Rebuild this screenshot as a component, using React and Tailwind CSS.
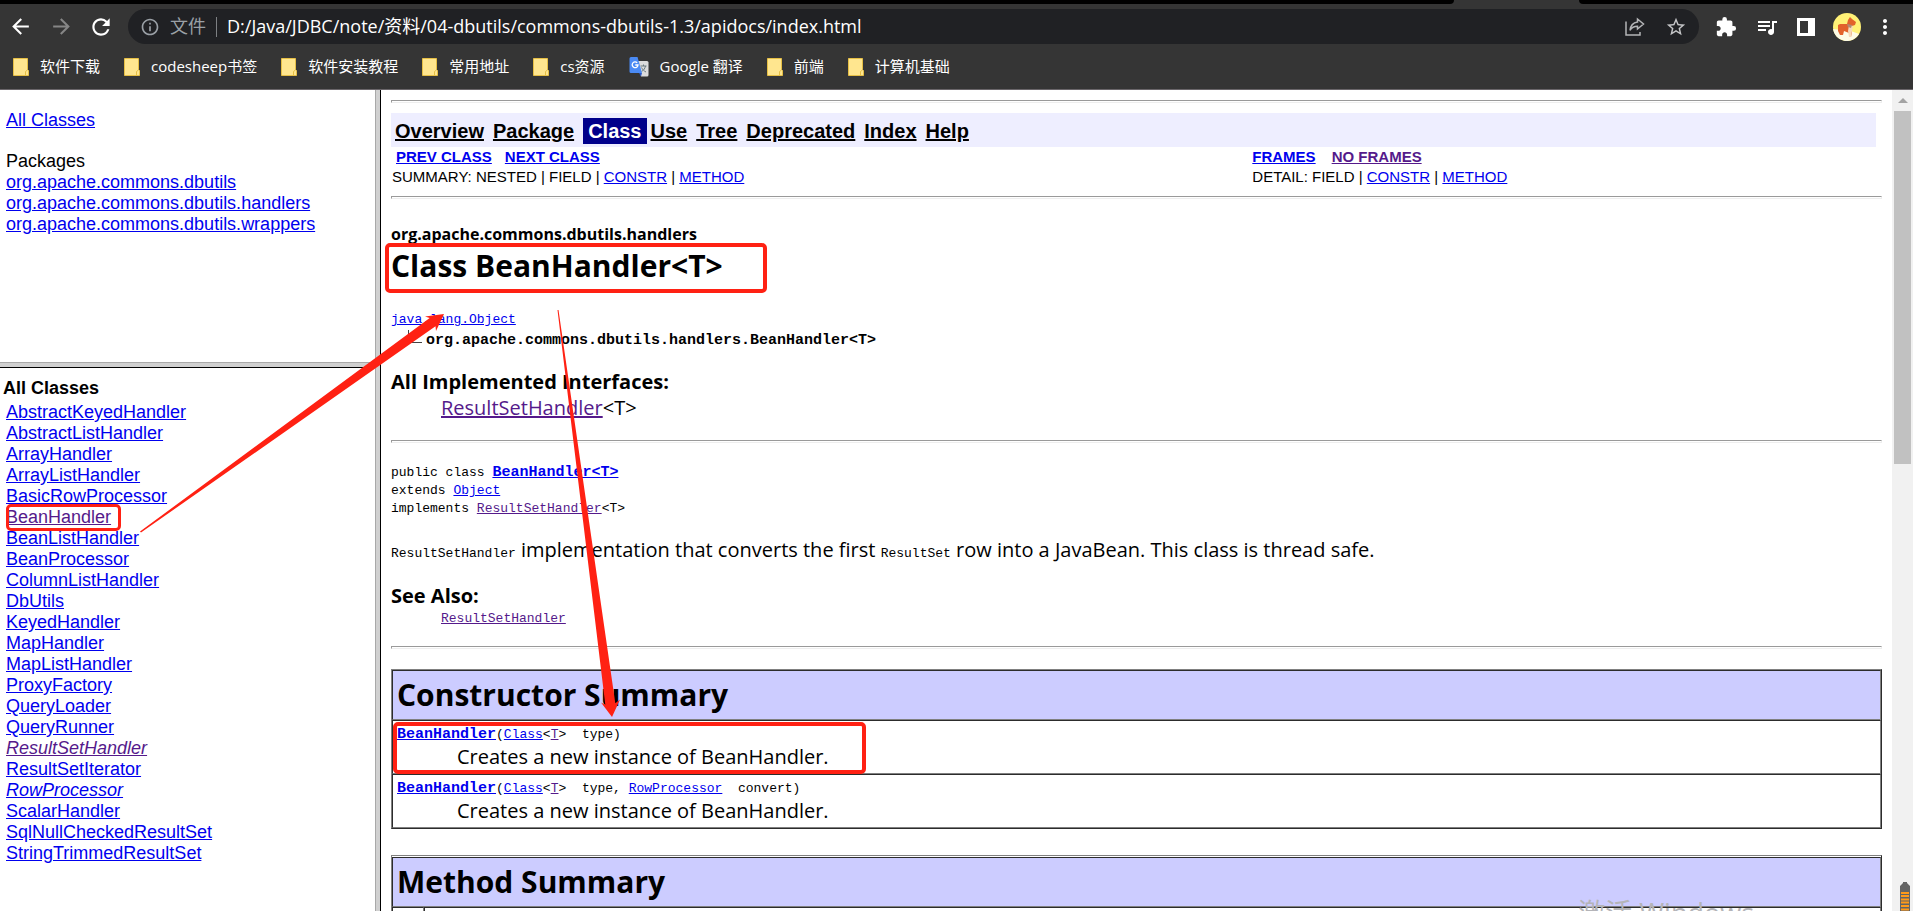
import React from "react";
import {
  MdArrowBack,
  MdArrowForward,
  MdExtension,
  MdInfoOutline,
  MdMoreVert,
  MdQueueMusic,
  MdRefresh,
  MdStarBorder,
} from "react-icons/md";

const bookmarks = [
  { label: "软件下载" },
  { label: "codesheep书签" },
  { label: "软件安装教程" },
  { label: "常用地址" },
  { label: "cs资源" },
  { label: "Google 翻译", icon: "translate" },
  { label: "前端" },
  { label: "计算机基础" },
];

const packages = [
  "org.apache.commons.dbutils",
  "org.apache.commons.dbutils.handlers",
  "org.apache.commons.dbutils.wrappers",
];

const classes = [
  { name: "AbstractKeyedHandler" },
  { name: "AbstractListHandler" },
  { name: "ArrayHandler" },
  { name: "ArrayListHandler" },
  { name: "BasicRowProcessor" },
  { name: "BeanHandler", visited: true, marked: true },
  { name: "BeanListHandler" },
  { name: "BeanProcessor" },
  { name: "ColumnListHandler" },
  { name: "DbUtils" },
  { name: "KeyedHandler" },
  { name: "MapHandler" },
  { name: "MapListHandler" },
  { name: "ProxyFactory" },
  { name: "QueryLoader" },
  { name: "QueryRunner" },
  { name: "ResultSetHandler", visited: true, italic: true },
  { name: "ResultSetIterator" },
  { name: "RowProcessor", italic: true },
  { name: "ScalarHandler" },
  { name: "SqlNullCheckedResultSet" },
  { name: "StringTrimmedResultSet" },
];

function Link({ visited, className = "", children }) {
  return (
    <a
      href="#"
      className={`underline ${visited ? "text-[#551a8b]" : "text-[#0000ee]"} ${className}`}
    >
      {children}
    </a>
  );
}

function Code({ className = "", children }) {
  return (
    <code className={`font-['Liberation_Mono',monospace] text-[13px] whitespace-pre ${className}`}>
      {children}
    </code>
  );
}

function Rule({ className = "" }) {
  return (
    <hr
      className={`h-[3px] border border-t-[#9a9a9a] border-r-[#eeeeee] border-b-[#eeeeee] border-l-[#9a9a9a] ${className}`}
    />
  );
}

function FolderIcon() {
  return (
    <svg width="16" height="18" viewBox="0 0 16 18" aria-hidden="true">
      <path d="M.5.5h14v11l1 1v5H.5z" fill="#ffe68f" stroke="#e6bf45" />
      <path d="M12.500 17v-3.500l2-1.500" fill="none" stroke="#e6bf45" />
    </svg>
  );
}

function TranslateIcon() {
  return (
    <svg width="20" height="20" viewBox="0 0 20 20" aria-hidden="true">
      <path d="M8 4h10a1.500 1.500 0 0 1 1.500 1.500V18a1.500 1.500 0 0 1-1.500 1.500h-6z" fill="#dcdcdc" />
      <path d="M11.500 9h6M14.500 7.500V9M16.500 9c-.5 2.500-2 4.500-4 5.500M12.500 10.500c1 2 2.500 3.500 4.500 4.500" fill="none" stroke="#6b7b80" />
      <path d="M2 0h6.500l4.500 16H2a1.500 1.500 0 0 1-1.500-1.500v-13A1.500 1.500 0 0 1 2 0z" fill="#4a8af4" />
      <path d="M13 16h-3l2 3.500z" fill="#2a56c6" />
      <path d="M8.200 5.800a2.900 2.900 0 1 0 .8 2.200H6.300" fill="none" stroke="#fff" strokeWidth="1.300" />
    </svg>
  );
}

function ShareIcon() {
  return (
    <svg width="20" height="20" viewBox="0 0 20 20" fill="none" stroke="#b4b5b7" strokeWidth="1.500" aria-hidden="true">
      <path d="M1 4.500V18h14v-3" />
      <path d="M12.500 2l6 5-6 5V9.300c-3.500 0-5.800 1.200-7.500 4 .5-4.500 3-7.600 7.500-8.300z" />
    </svg>
  );
}

function Avatar() {
  return (
    <svg width="28" height="28" viewBox="0 0 28 28" aria-hidden="true">
      <circle cx="14" cy="14" r="14" fill="#fff176" />
      <path d="M0 16a14 14 0 0 0 26 5l-8-3z" fill="#fdfbe6" />
      <path d="M5 12l2-1 7 0 1-4 2-3 2 2 4 3-1 3-3 1v6l-1 5h-2v-4l-5-2-1 4H7l-2-4z" fill="#e2622b" />
      <path d="M16 12l4 1-1 5-1 6h-2l-1-6z" fill="#f6d9b8" />
      <path d="M14 11l5 1-1 3-3-1z" fill="#b08a72" />
    </svg>
  );
}

function Toolbar() {
  return (
    <header className="shrink-0 border-b border-[#6a666a] bg-[#353535] font-['Open_Sans','Noto_Sans_CJK_SC',sans-serif]">
      {/* bottom edge of the tab strip */}
      <div className="flex h-1">
        <div className="flex-1 rounded-br bg-black" />
        <div className="w-[125px]" />
        <div className="w-[334px] rounded-bl bg-black" />
      </div>

      <div className="flex items-center pt-[5px] pr-4 pl-2">
        <button type="button" aria-label="Back" className="text-white">
          <MdArrowBack size={25} />
        </button>
        <button type="button" aria-label="Forward" className="ml-4 text-[#868686]">
          <MdArrowForward size={25} />
        </button>
        <button type="button" aria-label="Reload" className="ml-3.5 text-white">
          <MdRefresh size={26} />
        </button>

        <div className="ml-3.5 flex h-[35px] flex-1 items-center rounded-full bg-[#202124] pr-3 pl-3">
          <MdInfoOutline size={20} className="text-[#9aa0a6]" />
          <label htmlFor="address" className="ml-2.5 text-[18px] text-[#9aa0a6]">
            文件
          </label>
          <span className="ml-2.5 h-5 w-px bg-[#7d8083]" />
          <input
            id="address"
            type="text"
            defaultValue="D:/Java/JDBC/note/资料/04-dbutils/commons-dbutils-1.3/apidocs/index.html"
            className="ml-2.5 min-w-0 flex-1 bg-transparent text-[18px] text-white outline-none"
          />
          <button type="button" aria-label="Share" className="ml-4">
            <ShareIcon />
          </button>
          <button type="button" aria-label="Bookmark" className="ml-5 text-[#c4c5c7]">
            <MdStarBorder size={22} />
          </button>
        </div>

        <div className="ml-4 flex items-center gap-[18px] text-white">
          <button type="button" aria-label="Extensions">
            <MdExtension size={22} />
          </button>
          <button type="button" aria-label="Media">
            <MdQueueMusic size={24} />
          </button>
          <button type="button" aria-label="Side panel">
            <svg width="18" height="18" viewBox="0 0 18 18">
              <path d="M0 0h18v18H0zM3 3v12h8V3z" fill="#fff" fillRule="evenodd" />
            </svg>
          </button>
          <button type="button" aria-label="Profile">
            <Avatar />
          </button>
        </div>
        <button type="button" aria-label="Menu" className="ml-3 text-white">
          <MdMoreVert size={24} />
        </button>
      </div>

      <nav className="flex h-[45px] items-center gap-6 pl-[13px]">
        {bookmarks.map((item) => (
          <a
            key={item.label}
            href="#"
            className="flex items-center gap-[11px] text-[15px] whitespace-nowrap text-white"
          >
            {item.icon ? <TranslateIcon /> : <FolderIcon />}
            {item.label}
          </a>
        ))}
      </nav>
    </header>
  );
}

function PackageFrame() {
  return (
    <section className="h-[272px] shrink-0 pt-5 pl-1.5">
      <Link>All Classes</Link>
      <p className="mt-5">Packages</p>
      <ul>
        {packages.map((name) => (
          <li key={name}>
            <Link>{name}</Link>
          </li>
        ))}
      </ul>
    </section>
  );
}

function ClassFrame() {
  return (
    <section className="min-h-0 flex-1 overflow-hidden pt-2.5">
      <h2 className="pl-[3px] font-bold">All Classes</h2>
      <ul className="pt-[3px] pl-1.5">
        {classes.map(({ name, visited, italic, marked }) => (
          <li key={name}>
            <span className="relative inline-block">
              <Link visited={visited} className={italic ? "italic" : ""}>
                {name}
              </Link>
              {marked && (
                <span className="absolute -inset-y-[3px] -right-[10px] left-0 rounded-[5px] border-[3px] border-[#ff2113]" />
              )}
            </span>
          </li>
        ))}
      </ul>
    </section>
  );
}

function DocNav() {
  return (
    <div className="mr-1.5 font-['Liberation_Sans',Arial,sans-serif]">
      <nav className="flex h-[34px] items-center gap-[9px] bg-[#eeeeff] pt-0.5 pl-1 text-[20px] font-bold">
        <a href="#" className="underline">Overview</a>
        <a href="#" className="underline">Package</a>
        <div className="flex items-center gap-1">
          <span className="bg-[#00008b] px-[5px] leading-[26px] text-white">Class</span>
          <a href="#" className="underline">Use</a>
        </div>
        <a href="#" className="underline">Tree</a>
        <a href="#" className="underline">Deprecated</a>
        <a href="#" className="underline">Index</a>
        <a href="#" className="underline">Help</a>
      </nav>
      <div className="flex text-[15px] leading-5">
        <div className="w-[58%] pl-px">
          <p className="flex gap-[13px] pl-1 font-bold">
            <Link>PREV CLASS</Link>
            <Link>NEXT CLASS</Link>
          </p>
          <p>
            SUMMARY: NESTED | FIELD | <Link>CONSTR</Link> | <Link>METHOD</Link>
          </p>
        </div>
        <div>
          <p className="flex gap-4 font-bold">
            <Link>FRAMES</Link>
            <Link visited>NO FRAMES</Link>
          </p>
          <p>
            DETAIL: FIELD | <Link>CONSTR</Link> | <Link>METHOD</Link>
          </p>
        </div>
      </div>
    </div>
  );
}

const cell = "border border-t-[#2c2c2c] border-r-[#808080] border-b-[#808080] border-l-[#2c2c2c]";
const table =
  "w-full border-separate border-spacing-0 border border-t-[#808080] border-r-[#2c2c2c] border-b-[#2c2c2c] border-l-[#808080]";

function SummaryHead({ children }) {
  return (
    <thead>
      <tr>
        <th
          colSpan={2}
          className={`${cell} h-[50px] bg-[#ccccff] px-1 text-left text-[30px] leading-10 font-bold`}
        >
          {children}
        </th>
      </tr>
    </thead>
  );
}

function ConstructorRow({ marked, children }) {
  return (
    <tr>
      <td className={`${cell} relative px-1 pt-[3px] pb-[5px] leading-[22px]`}>
        <Code className="block">{children}</Code>
        <p className="pl-[60px]">Creates a new instance of BeanHandler.</p>
        {marked && (
          <span className="absolute top-px left-0 h-[52px] w-[473px] rounded-[5px] border-4 border-[#ff2113]" />
        )}
      </td>
    </tr>
  );
}

function DocFrame() {
  return (
    <main className="min-w-0 flex-1 overflow-hidden px-2.5 pt-2.5 font-['Open_Sans','Noto_Sans_CJK_SC',sans-serif] text-[20px] leading-[26px]">
      <Rule className="mb-2.5" />
      <DocNav />
      <Rule className="mt-[9px]" />

      <p className="mt-[23px] text-[16px] leading-6 font-bold">org.apache.commons.dbutils.handlers</p>
      <h1 className="relative text-[30px] leading-10 font-bold">
        Class BeanHandler&lt;T&gt;
        <span className="absolute -top-[3px] -left-1.5 h-[50px] w-[382px] rounded-[5px] border-4 border-[#ff2113]" />
      </h1>

      <div className="mt-[23px] leading-[21px]">
        <Code className="block">
          <Link>java.lang.Object</Link>
        </Code>
        <div className="flex h-[21px] pl-[17px]">
          <svg width="18" height="14" viewBox="0 0 18 14" aria-hidden="true">
            <path d="M.5 0v12.500H14" fill="none" stroke="#444" />
          </svg>
          <Code>
            <b className="text-[15px]">org.apache.commons.dbutils.handlers.BeanHandler&lt;T&gt;</b>
          </Code>
        </div>
      </div>

      <dl className="mt-[18px]">
        <dt className="font-bold">All Implemented Interfaces:</dt>
        <dd className="pl-[50px]">
          <Link visited>ResultSetHandler</Link>&lt;T&gt;
        </dd>
      </dl>
      <Rule className="mt-[19px]" />

      <div className="mt-[21px] leading-[18px]">
        <Code className="block">
          public class <Link className="text-[15px] font-bold">BeanHandler&lt;T&gt;</Link>
        </Code>
        <Code className="block">
          extends <Link>Object</Link>
        </Code>
        <Code className="block">
          implements <Link visited>ResultSetHandler</Link>&lt;T&gt;
        </Code>
      </div>

      <p className="mt-[19px] h-[26px]">
        <Code>ResultSetHandler</Code> implementation that converts the first <Code>ResultSet</Code>{" "}
        row into a JavaBean. This class is thread safe.
      </p>

      <dl className="mt-5">
        <dt className="font-bold">See Also:</dt>
        <dd className="pl-[50px] leading-5">
          <Code className="block">
            <Link visited>ResultSetHandler</Link>
          </Code>
        </dd>
      </dl>
      <Rule className="mt-[17px]" />

      <table className={`${table} mt-5`}>
        <SummaryHead>Constructor Summary</SummaryHead>
        <tbody>
          <ConstructorRow marked>
            <Link className="text-[15px] font-bold">BeanHandler</Link>(<Link>Class</Link>&lt;
            <Link visited>T</Link>&gt;{"  type)"}
          </ConstructorRow>
          <ConstructorRow>
            <Link className="text-[15px] font-bold">BeanHandler</Link>(<Link>Class</Link>&lt;
            <Link visited>T</Link>&gt;{"  type, "}
            <Link>RowProcessor</Link>
            {"  convert)"}
          </ConstructorRow>
        </tbody>
      </table>

      <table className={`${table} mt-[26px] pt-px`}>
        <SummaryHead>Method Summary</SummaryHead>
        <tbody>
          <tr>
            <td className={`${cell} h-[54px] w-8`} />
            <td className={cell} />
          </tr>
        </tbody>
      </table>
    </main>
  );
}

function ScrollBar() {
  return (
    <div className="flex w-[21px] shrink-0 flex-col items-center bg-[#f1f1f1]">
      <div className="flex h-[21px] items-center">
        <svg width="10" height="5" viewBox="0 0 10 5" aria-hidden="true">
          <path d="M5 0l5 5H0z" fill="#a3a3a3" />
        </svg>
      </div>
      <div className="h-[43%] w-[17px] bg-[#c1c1c1]" />
    </div>
  );
}

function Arrows() {
  return (
    <svg
      width="640"
      height="740"
      viewBox="0 0 640 740"
      fill="#ff2113"
      className="pointer-events-none absolute top-0 left-0"
      aria-hidden="true"
    >
      <path d="M140 531.500L429.700 318.100 425 316.600 444 314 436 331 435.500 326.300 141 532.500z" />
      <path d="M557.500 310L605.300 704.700 601 702.500 612 717 620 699.500 615.300 703.300 558.500 310z" />
    </svg>
  );
}

export default function App() {
  return (
    <div className="relative flex h-screen flex-col overflow-hidden bg-white text-black">
      <Toolbar />
      <div className="flex min-h-0 flex-1">
        <aside className="flex w-[375px] shrink-0 flex-col font-['Liberation_Sans',Arial,sans-serif] text-[18px] leading-[21px]">
          <PackageFrame />
          <div className="h-1.5 shrink-0 border-t border-b border-t-[#a8a8a8] border-b-black bg-[#d0d0d0]" />
          <ClassFrame />
        </aside>
        <div className="w-1.5 shrink-0 border-r border-l border-r-black border-l-[#a8a8a8] bg-[#d0d0d0]" />
        <DocFrame />
        <ScrollBar />
      </div>

      <Arrows />

      {/* desktop overlays */}
      <p className="absolute right-[159px] -bottom-[18px] font-['Open_Sans','Noto_Sans_CJK_SC',sans-serif] text-[27px] leading-8 text-[#b4b4b8]">
        激活 Windows
      </p>
      <svg width="10" height="29" viewBox="0 0 10 29" className="absolute right-[3px] bottom-0" aria-hidden="true">
        <path d="M3 0h4v1l3 3v25H0V4l3-3z" fill="#646464" />
        <path d="M1 11h8M1 14h8M1 17.500h8M1 20.500h8M1 24h8M1 27.500h8" stroke="#ff9a1a" strokeWidth="2" />
      </svg>
    </div>
  );
}
